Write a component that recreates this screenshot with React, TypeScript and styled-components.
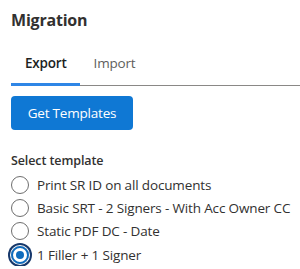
import styled, { createGlobalStyle } from "styled-components";
import { useState } from "react";

const GlobalStyle = createGlobalStyle`
  body {
    margin: 0;
    background: #fff;
    font-family: "Open Sans", "Noto Sans", Arial, sans-serif;
    color: #323130;
  }
`;

const Panel = styled.div`
  padding: 8px 0 0 11px;
  overflow: hidden;
`;

const Title = styled.h2`
  margin: 0;
  font-size: 16px;
  font-weight: 700;
  line-height: 24px;
  letter-spacing: -0.2px;
`;

const TabBar = styled.div`
  display: flex;
  margin-top: 22px;
  border-bottom: 1px solid #8a8886;
`;

const Tab = styled.button<{ $active?: boolean }>`
  position: relative;
  border: none;
  background: none;
  padding: 0 13px 12px 14px;
  font-family: inherit;
  font-size: 13.5px;
  line-height: 19px;
  font-weight: ${(p) => (p.$active ? 600 : 400)};
  color: ${(p) => (p.$active ? "#201f1e" : "#605e5c")};
  letter-spacing: -0.2px;
  cursor: pointer;

  &::after {
    content: "";
    position: absolute;
    left: 0;
    right: 0;
    bottom: -1px;
    height: 3px;
    background: ${(p) => (p.$active ? "#2f86e6" : "transparent")};
  }
`;

const PrimaryButton = styled.button`
  display: block;
  margin-top: 10px;
  width: 122px;
  height: 34px;
  border: none;
  border-radius: 4px;
  background: #0f78d4;
  color: #fff;
  font-family: inherit;
  font-size: 13.5px;
  font-weight: 500;
  letter-spacing: -0.2px;
  cursor: pointer;
`;

const Label = styled.div`
  margin-top: 22px;
  font-size: 12.5px;
  font-weight: 600;
  line-height: 18px;
  letter-spacing: -0.1px;
`;

const Options = styled.div`
  display: flex;
  flex-direction: column;
  margin-top: 3px;
`;

const Option = styled.label`
  display: flex;
  align-items: center;
  gap: 8px;
  height: 23.3px;
  font-size: 13.5px;
  letter-spacing: -0.15px;
  cursor: pointer;
  white-space: nowrap;
`;

const Circle = styled.span<{ $checked?: boolean }>`
  position: relative;
  box-sizing: border-box;
  flex: none;
  width: 18px;
  height: 18px;
  border-radius: 50%;
  border: ${(p) => (p.$checked ? "2px solid #0f6cbd" : "1px solid #6e6e6e")};
  box-shadow: ${(p) =>
    p.$checked ? "0 0 0 1px #fff, 0 0 0 3px #17386b" : "none"};

  &::after {
    content: "";
    display: ${(p) => (p.$checked ? "block" : "none")};
    position: absolute;
    left: 3px;
    top: 3px;
    width: 8px;
    height: 8px;
    border-radius: 50%;
    background: #0f6cbd;
  }
`;

const templates = [
  "Print SR ID on all documents",
  "Basic SRT - 2 Signers - With Acc Owner CC",
  "Static PDF DC - Date",
  "1 Filler + 1 Signer",
];

export default function App() {
  const [tab, setTab] = useState("export");
  const [selected, setSelected] = useState(3);

  return (
    <Panel>
      <GlobalStyle />
      <Title>Migration</Title>
      <TabBar>
        <Tab $active={tab === "export"} onClick={() => setTab("export")}>
          Export
        </Tab>
        <Tab $active={tab === "import"} onClick={() => setTab("import")}>
          Import
        </Tab>
      </TabBar>
      <PrimaryButton>Get Templates</PrimaryButton>
      <Label>Select template</Label>
      <Options>
        {templates.map((name, i) => (
          <Option key={name} onClick={() => setSelected(i)}>
            <Circle $checked={selected === i} />
            {name}
          </Option>
        ))}
      </Options>
    </Panel>
  );
}
